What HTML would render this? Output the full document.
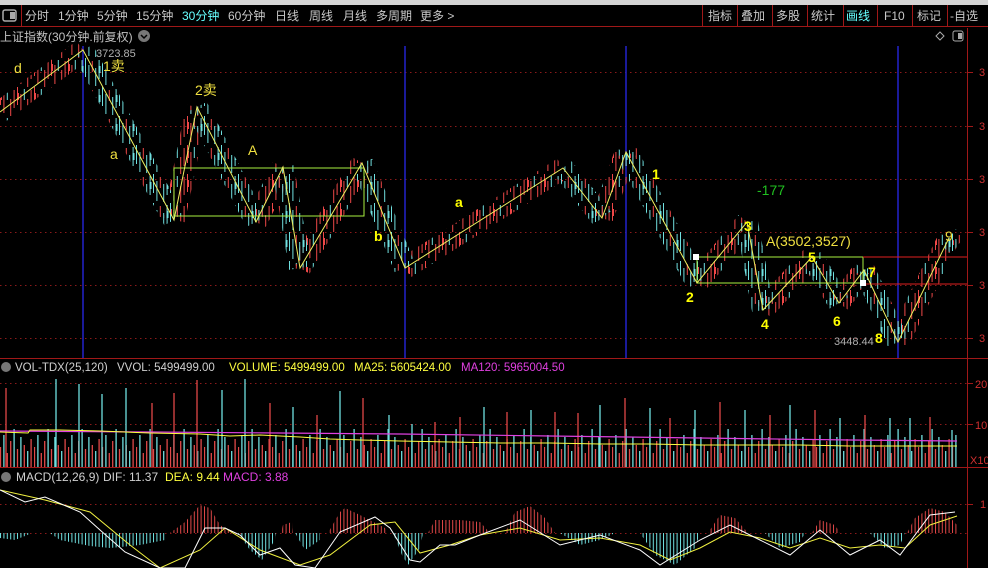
<!DOCTYPE html><html><head><meta charset="utf-8"><style>
html,body{margin:0;padding:0;background:#000;width:988px;height:568px;overflow:hidden}
svg{display:block}
text{font-family:"Liberation Sans","Noto Sans CJK SC",sans-serif}
</style></head><body>
<svg width="988" height="568" viewBox="0 0 988 568" xmlns="http://www.w3.org/2000/svg">
<defs>
<pattern id="pr" patternUnits="userSpaceOnUse" width="17" height="29">
<line x1="0.5" y1="0" x2="0.5" y2="18" stroke="#f04848"/><rect x="0" y="6" width="2" height="7" fill="#f04848"/>
<line x1="3.9" y1="7" x2="3.9" y2="26" stroke="#f04848"/>
<line x1="7.3" y1="2" x2="7.3" y2="13" stroke="#70e0e0"/>
<line x1="10.7" y1="12" x2="10.7" y2="29" stroke="#f04848"/>
<line x1="14.1" y1="3" x2="14.1" y2="21" stroke="#f04848"/>
</pattern>
<pattern id="pc" patternUnits="userSpaceOnUse" width="17" height="29">
<line x1="0.5" y1="0" x2="0.5" y2="19" stroke="#70e0e0"/>
<line x1="3.9" y1="7" x2="3.9" y2="27" stroke="#70e0e0"/>
<line x1="7.3" y1="3" x2="7.3" y2="14" stroke="#f04848"/>
<line x1="10.7" y1="10" x2="10.7" y2="28" stroke="#70e0e0"/>
<line x1="14.1" y1="2" x2="14.1" y2="21" stroke="#70e0e0"/><rect x="13.5" y="8" width="2" height="7" fill="#70e0e0"/>
</pattern>
<pattern id="pv" patternUnits="userSpaceOnUse" width="34" height="44" patternTransform="translate(0,423)">
<line x1="0.5" y1="24" x2="0.5" y2="44" stroke="#e04848" stroke-width="1.3"/>
<line x1="3.9" y1="12" x2="3.9" y2="44" stroke="#70e0e0" stroke-width="1.3"/>
<line x1="7.3" y1="30" x2="7.3" y2="44" stroke="#e04848" stroke-width="1.3"/>
<line x1="10.7" y1="18" x2="10.7" y2="44" stroke="#e04848" stroke-width="1.3"/>
<line x1="14.1" y1="6" x2="14.1" y2="44" stroke="#70e0e0" stroke-width="1.3"/>
<line x1="17.5" y1="26" x2="17.5" y2="44" stroke="#e04848" stroke-width="1.3"/>
<line x1="20.9" y1="14" x2="20.9" y2="44" stroke="#70e0e0" stroke-width="1.3"/>
<line x1="24.3" y1="22" x2="24.3" y2="44" stroke="#e04848" stroke-width="1.3"/>
<line x1="27.7" y1="28" x2="27.7" y2="44" stroke="#70e0e0" stroke-width="1.3"/>
<line x1="31.1" y1="16" x2="31.1" y2="44" stroke="#e04848" stroke-width="1.3"/>
</pattern>
<pattern id="hr" patternUnits="userSpaceOnUse" width="3.4" height="10"><line x1="0.5" y1="0" x2="0.5" y2="10" stroke="#e04848"/></pattern>
<pattern id="hc" patternUnits="userSpaceOnUse" width="3.4" height="10"><line x1="0.5" y1="0" x2="0.5" y2="10" stroke="#70e0e0"/></pattern>
<mask id="mr" maskUnits="userSpaceOnUse" x="0" y="0" width="988" height="568"><g stroke="#fff" stroke-width="22" fill="none">
<path d="M0 112L83 50M174 220L197 107M256 222L283 167M300 268L362 163M405 268L563 168M602 218L626 152M697 283L747 222M763 310L812 257M839 303L864 270M898 342L949 238"/></g></mask>
<mask id="mc" maskUnits="userSpaceOnUse" x="0" y="0" width="988" height="568"><g stroke="#fff" stroke-width="22" fill="none">
<path d="M83 50L174 220M197 107L256 222M283 167L300 268M362 163L405 268M563 168L602 218M626 152L697 283M747 222L763 310M812 257L839 303M864 270L898 342M949 238L958 245"/></g></mask>
</defs>
<rect width="988" height="568" fill="#000"/>
<rect width="988" height="5" fill="#d4d4d4"/>
<line x1="0" y1="26.5" x2="988" y2="26.5" stroke="#a01818"/>
<rect x="3" y="10" width="13" height="11" rx="2" fill="none" stroke="#aaa" stroke-width="1.5"/><rect x="10" y="12" width="5" height="7" fill="#aaa"/>
<line x1="21.5" y1="5" x2="21.5" y2="26" stroke="#a01818"/>
<g font-size="12" fill="#c8c8c8">
<text x="25" y="20">分时</text><text x="58" y="20">1分钟</text><text x="97" y="20">5分钟</text><text x="136" y="20">15分钟</text><text x="182" y="20" fill="#6ff">30分钟</text><text x="228" y="20">60分钟</text><text x="275" y="20">日线</text><text x="309" y="20">周线</text><text x="343" y="20">月线</text><text x="376" y="20">多周期</text><text x="420" y="20">更多 &gt;</text>
<text x="708" y="20">指标</text><text x="741" y="20">叠加</text><text x="776" y="20">多股</text><text x="811" y="20">统计</text><text x="846" y="20" fill="#6ff">画线</text><text x="884" y="20">F10</text><text x="917" y="20">标记</text><text x="950" y="20">-自选</text>
</g>
<g stroke="#a01818"><line x1="702.5" y1="5" x2="702.5" y2="26"/><line x1="737.5" y1="5" x2="737.5" y2="26"/><line x1="772.5" y1="5" x2="772.5" y2="26"/><line x1="807.5" y1="5" x2="807.5" y2="26"/><line x1="843.5" y1="5" x2="843.5" y2="26"/><line x1="877.5" y1="5" x2="877.5" y2="26"/><line x1="912.5" y1="5" x2="912.5" y2="26"/><line x1="947.5" y1="5" x2="947.5" y2="26"/></g>
<text x="0" y="41" font-size="12" fill="#c0c0c0">上证指数(30分钟.前复权)</text>
<circle cx="144" cy="36" r="6" fill="#777"/><path d="M141 35 l3 3 l3 -3" stroke="#000" stroke-width="1.5" fill="none"/>
<path d="M940 32 l4 4 l-4 4 l-4 -4z" fill="none" stroke="#aaa"/>
<rect x="953" y="31" width="10" height="10" rx="2" fill="none" stroke="#aaa"/><rect x="958" y="33" width="4" height="6" fill="#aaa"/>
<g stroke="#8a1a1a" stroke-dasharray="1.5,3.5">
<line x1="0" y1="72.5" x2="967" y2="72.5"/><line x1="0" y1="126.5" x2="967" y2="126.5"/><line x1="0" y1="179.5" x2="967" y2="179.5"/><line x1="0" y1="232.5" x2="967" y2="232.5"/><line x1="0" y1="285.5" x2="967" y2="285.5"/><line x1="0" y1="338.5" x2="967" y2="338.5"/>
<line x1="0" y1="383.5" x2="967" y2="383.5"/><line x1="0" y1="424.5" x2="967" y2="424.5"/><line x1="0" y1="504.5" x2="967" y2="504.5"/><line x1="0" y1="533.5" x2="967" y2="533.5"/>
</g>
<g stroke="#a01818"><line x1="967" y1="72.5" x2="973" y2="72.5"/><line x1="967" y1="126.5" x2="973" y2="126.5"/><line x1="967" y1="179.5" x2="973" y2="179.5"/><line x1="967" y1="232.5" x2="973" y2="232.5"/><line x1="967" y1="285.5" x2="973" y2="285.5"/><line x1="967" y1="338.5" x2="973" y2="338.5"/><line x1="967" y1="383.5" x2="973" y2="383.5"/><line x1="967" y1="424.5" x2="973" y2="424.5"/><line x1="967" y1="504.5" x2="973" y2="504.5"/></g>
<g font-size="11" fill="#d03030"><text x="979" y="76">3</text><text x="979" y="130">3</text><text x="979" y="183">3</text><text x="979" y="236">3</text><text x="979" y="289">3</text><text x="979" y="342">3</text></g>
<line x1="967.5" y1="28" x2="967.5" y2="568" stroke="#a01818"/>
<line x1="0" y1="358.5" x2="988" y2="358.5" stroke="#a01818"/>
<line x1="0" y1="467.5" x2="988" y2="467.5" stroke="#a01818"/>
<g stroke="#2222cc" stroke-width="1.5"><line x1="83" y1="46" x2="83" y2="358"/><line x1="405" y1="46" x2="405" y2="358"/><line x1="626" y1="46" x2="626" y2="358"/><line x1="898" y1="46" x2="898" y2="358"/></g>
<rect x="0" y="30" width="960" height="330" fill="url(#pr)" mask="url(#mr)"/>
<rect x="0" y="30" width="960" height="330" fill="url(#pc)" mask="url(#mc)"/>
<rect x="0" y="423" width="957" height="44" fill="url(#pv)"/>
<g stroke-width="1.3">
<g stroke="#e04848"><line x1="6" y1="388" x2="6" y2="467"/><line x1="152" y1="403" x2="152" y2="467"/><line x1="174" y1="393" x2="174" y2="467"/><line x1="197" y1="380" x2="197" y2="467"/><line x1="270" y1="403" x2="270" y2="467"/><line x1="317" y1="415" x2="317" y2="467"/><line x1="363" y1="398" x2="363" y2="467"/><line x1="435" y1="422" x2="435" y2="467"/><line x1="460" y1="417" x2="460" y2="467"/><line x1="507" y1="412" x2="507" y2="467"/><line x1="555" y1="412" x2="555" y2="467"/><line x1="578" y1="413" x2="578" y2="467"/><line x1="625" y1="398" x2="625" y2="467"/><line x1="670" y1="418" x2="670" y2="467"/><line x1="720" y1="402" x2="720" y2="467"/><line x1="770" y1="415" x2="770" y2="467"/><line x1="815" y1="410" x2="815" y2="467"/><line x1="865" y1="415" x2="865" y2="467"/><line x1="930" y1="417" x2="930" y2="467"/></g>
<g stroke="#70e0e0"><line x1="56" y1="379" x2="56" y2="467"/><line x1="79" y1="384" x2="79" y2="467"/><line x1="102" y1="394" x2="102" y2="467"/><line x1="126" y1="388" x2="126" y2="467"/><line x1="222" y1="390" x2="222" y2="467"/><line x1="245" y1="379" x2="245" y2="467"/><line x1="293" y1="407" x2="293" y2="467"/><line x1="340" y1="391" x2="340" y2="467"/><line x1="389" y1="415" x2="389" y2="467"/><line x1="412" y1="424" x2="412" y2="467"/><line x1="484" y1="407" x2="484" y2="467"/><line x1="531" y1="410" x2="531" y2="467"/><line x1="600" y1="405" x2="600" y2="467"/><line x1="650" y1="408" x2="650" y2="467"/><line x1="695" y1="410" x2="695" y2="467"/><line x1="745" y1="410" x2="745" y2="467"/><line x1="790" y1="405" x2="790" y2="467"/><line x1="840" y1="418" x2="840" y2="467"/><line x1="890" y1="418" x2="890" y2="467"/><line x1="910" y1="418" x2="910" y2="467"/><line x1="952" y1="430" x2="952" y2="467"/></g>
</g>
<polyline fill="none" stroke="#e040e0" stroke-width="1.2" points="0,431 150,432 280,433 400,434 550,436 700,438 850,440 957,441"/>
<polyline fill="none" stroke="#ffff40" stroke-width="1" points="0,432 28,433 30,430 60,430 100,431 150,433 200,434 230,436 260,435 300,437 330,439 360,440 400,441 450,442 500,443 550,443 600,444 650,444 700,445 750,445 800,445 850,446 900,446 957,446"/>
<g>
<polygon fill="url(#hc)" points="0,533 0,538 15,540 30,534 30,533"/>
<polygon fill="url(#hc)" points="50,533 60,540 90,546 110,548 140,545 165,540 165,533"/>
<polygon fill="url(#hr)" points="170,533 185,522 200,505 210,508 220,525 232,533"/>
<polygon fill="url(#hc)" points="238,533 250,550 262,560 275,540 276,533"/>
<polygon fill="url(#hr)" points="281,533 283,525 292,522 293,533"/>
<polygon fill="url(#hc)" points="295,533 305,550 320,540 320,533"/>
<polygon fill="url(#hr)" points="328,533 340,512 345,508 360,515 385,528 387,533"/>
<polygon fill="url(#hc)" points="393,533 402,555 408,565 420,548 423,533"/>
<polygon fill="url(#hr)" points="428,533 435,520 460,520 480,522 490,533"/>
<polygon fill="url(#hr)" points="505,533 515,512 530,506 545,518 555,533"/>
<polygon fill="url(#hc)" points="560,533 580,545 600,540 615,533"/>
<polygon fill="url(#hc)" points="640,533 655,555 675,565 695,548 700,533"/>
<polygon fill="url(#hr)" points="708,533 720,515 735,518 748,533"/>
<polygon fill="url(#hc)" points="765,533 780,548 800,542 805,533"/>
<polygon fill="url(#hr)" points="812,533 820,520 835,525 840,533"/>
<polygon fill="url(#hc)" points="870,533 885,548 900,545 905,533"/>
<polygon fill="url(#hr)" points="907,533 915,518 930,508 945,512 957,525 957,533"/>
</g>
<polyline fill="none" stroke="#f0f040" points="0,490 45,500 90,512 130,545 160,568 200,550 225,528 260,550 300,565 330,555 370,525 395,522 420,553 450,545 480,535 520,528 560,540 600,538 640,545 670,560 700,548 730,532 760,538 790,548 820,538 850,548 880,545 905,548 930,525 957,516"/>
<polyline fill="none" stroke="#fff" points="0,490 25,502 45,497 80,512 100,530 125,552 160,568 185,568 205,528 225,528 240,535 260,555 280,548 295,565 315,568 340,532 375,517 390,528 410,560 420,562 440,545 455,545 480,535 520,520 560,545 600,535 640,550 660,565 700,540 730,525 760,540 790,555 820,530 850,555 880,540 900,555 930,515 955,512"/>
<g fill="none" stroke-width="1">
<rect x="174" y="168" width="190" height="48" stroke="#a8f040"/>
<rect x="697" y="257" width="166" height="26" stroke="#a8f040"/>
<line x1="863" y1="257" x2="967" y2="257" stroke="#e02020"/><line x1="863" y1="284" x2="967" y2="284" stroke="#e02020"/>
<polyline stroke="#f0f060" points="0,112 83,50 174,220 197,107 256,222 283,167 300,268 362,163 405,268 563,168 602,218 626,152 697,283 747,222 763,310 812,257 839,303 864,270 898,342 949,238"/>
</g>
<rect x="693" y="254" width="6" height="6" fill="#fff"/><rect x="860" y="280" width="6" height="6" fill="#fff"/>
<g font-size="14" fill="#f0e040">
<text x="14" y="73">d</text><text x="103" y="71">1卖</text><text x="110" y="159">a</text><text x="195" y="95">2卖</text><text x="248" y="155">A</text>
<text x="374" y="241" font-weight="bold" fill="#ff0">b</text><text x="455" y="207" font-weight="bold" fill="#ff0">a</text>
<text x="652" y="179" font-weight="bold" fill="#ff0">1</text><text x="744" y="231" font-weight="bold" fill="#ff0">3</text>
<text x="766" y="246">A(3502,3527)</text>
<text x="686" y="302" font-weight="bold" fill="#ff0">2</text><text x="808" y="262" font-weight="bold" fill="#ff0">5</text><text x="868" y="277" font-weight="bold" fill="#ff0">7</text>
<text x="761" y="329" font-weight="bold" fill="#ff0">4</text><text x="833" y="326" font-weight="bold" fill="#ff0">6</text><text x="875" y="343" font-weight="bold" fill="#ff0">8</text><text x="945" y="241">9</text>
<text x="757" y="195" fill="#20c020">-177</text>
</g>
<text x="96" y="57" font-size="11" fill="#b0b0b0">3723.85</text><text x="834" y="345" font-size="11" fill="#b0b0b0">3448.44</text>
<g font-size="11.5">
<circle cx="6" cy="367" r="5" fill="#777"/><circle cx="6" cy="477" r="5" fill="#777"/>
<text x="15" y="371" fill="#d0d0d0">VOL-TDX(25,120)</text><text x="117" y="371" fill="#d0d0d0">VVOL: 5499499.00</text>
<text x="229" y="371" fill="#ffff40">VOLUME: 5499499.00</text><text x="354" y="371" fill="#ffff40">MA25: 5605424.00</text>
<text x="461" y="371" fill="#e040e0">MA120: 5965004.50</text>
<text x="16" y="481" fill="#d0d0d0" font-size="12">MACD(12,26,9)</text><text x="103" y="481" fill="#d0d0d0" font-size="12">DIF: 11.37</text>
<text x="165" y="481" fill="#ffff40" font-size="12">DEA: 9.44</text>
<text x="223" y="481" fill="#e040e0" font-size="12">MACD: 3.88</text>
<g fill="#d03030" font-size="11"><text x="975" y="388">20</text><text x="975" y="429">10</text><text x="970" y="464">X10</text><text x="980" y="508">1</text></g>
</g>
</svg>
</body></html>
